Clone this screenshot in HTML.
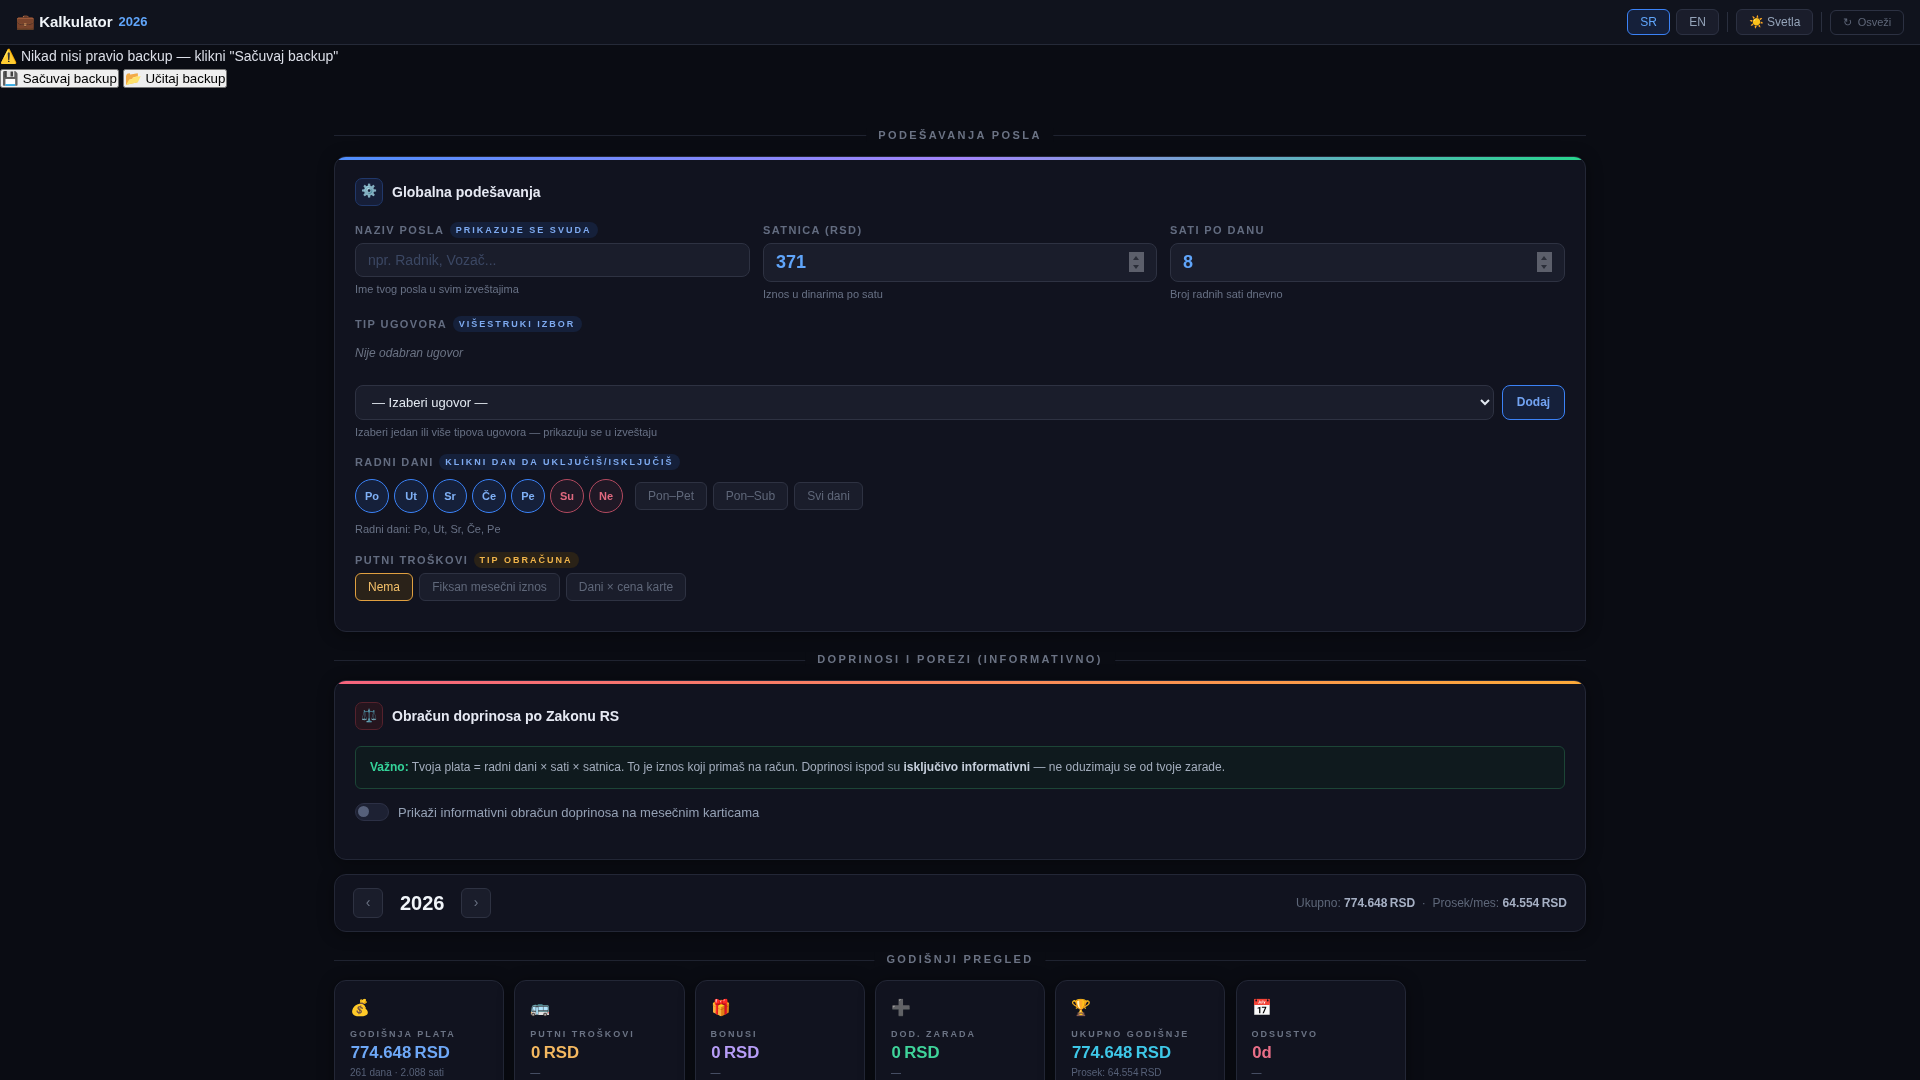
<!DOCTYPE html>
<html lang="sr"><head><meta charset="utf-8"><title>Kalkulator 2026</title>
<style>
*{box-sizing:border-box}
html,body{margin:0;padding:0}
body{background:#0a0c13;font-family:"Liberation Sans",sans-serif;color:#e2e8f0;width:1920px;height:1080px;overflow:hidden;position:relative}
.hdr{position:absolute;left:0;top:0;width:1920px;height:45px;background:#10131d;border-bottom:1px solid #252a38}
.logo{position:absolute;left:16px;top:13px;font-size:15px;font-weight:bold;color:#f1f5f9;white-space:nowrap}
.logo .yr{color:#60a5fa;font-size:13px;margin-left:6px;position:relative;top:-1px}
.hb{position:absolute;top:9px;height:26px;border:1px solid #2c3142;background:#1a1d2b;border-radius:6px;color:#94a3b8;font-size:12px;line-height:24px;text-align:center;white-space:nowrap}
.hb.on{background:#15203a;border-color:#3b82f6;color:#60a5fa}
.sep{position:absolute;top:12px;width:1px;height:20px;background:#2a2f3e}
.bk{position:absolute;left:0;top:45px;font-size:14px;color:#dcdfe8;white-space:nowrap}
.bk .t{height:24px;line-height:22px}
.bk button{font-family:"Liberation Sans",sans-serif;font-size:13.333px;padding:0;height:19px;margin:0;vertical-align:top}
.st{position:absolute;left:334px;width:1252px;height:1px;background:#1f2330}
.st span{position:absolute;left:50%;top:-7px;transform:translateX(-50%);background:#0a0c13;padding:0 12px 0 12px;font-size:11px;font-weight:bold;letter-spacing:2.4px;color:#6b7384;line-height:14px;white-space:nowrap}
.card{position:absolute;left:334px;width:1252px;background:#11131f;border:1px solid #232736;border-radius:12px;overflow:hidden;box-shadow:0 2px 16px rgba(0,0,0,.4)}
.card .bar{position:absolute;left:0;top:0;right:0;height:3px}
.ch{position:absolute;left:20px;display:flex;align-items:center}
.ic{width:28px;height:28px;border-radius:7px;border:1px solid #1e3356;background:#141d33;display:flex;align-items:center;justify-content:center;font-size:13px}
.ct{margin-left:9px;font-size:14px;font-weight:bold;color:#e6e9f3}
.lbl{position:absolute;display:flex;align-items:center;height:16px;font-size:11px;font-weight:bold;letter-spacing:1.4px;color:#636c80;white-space:nowrap;line-height:16px}
.bdg{display:inline-block;margin-left:5.5px;padding:0 6.5px 0 6px;height:16px;line-height:16px;border-radius:8px;background:#15203a;color:#7eaaf0;font-size:9px;letter-spacing:2px}
.inp{position:absolute;background:#1a1d2b;border:1px solid #2e3242;border-radius:8px}
.hint{position:absolute;font-size:11px;color:#687185;white-space:nowrap;line-height:14px}

.ph{position:absolute;left:12px;top:0;line-height:32px;font-size:14px;color:#3b4763;white-space:nowrap}
.num{position:absolute;left:12px;top:0;line-height:37px;font-size:18px;font-weight:bold;color:#60a5fa}
.spin{position:absolute;right:12px;top:8px;width:15px;height:20px;background:#5c5f6b}
.spin:before{content:"";position:absolute;left:4px;top:4px;border-left:3.5px solid transparent;border-right:3.5px solid transparent;border-bottom:4px solid #2b2e39}
.spin:after{content:"";position:absolute;left:4px;bottom:3px;border-left:3.5px solid transparent;border-right:3.5px solid transparent;border-top:4px solid #2b2e39}
.it{position:absolute;font-size:12px;font-style:italic;color:#6b7384;white-space:nowrap}
.sel{position:absolute;background:#1a1d2b;border:1px solid #2e3242;border-radius:8px;font-size:13px;color:#e2e8f0;white-space:nowrap}
.btn{position:absolute;border:1px solid #2e3242;background:#1a1d2b;border-radius:6px;font-size:12px;color:#5f6779;text-align:center;white-space:nowrap}
.day{position:absolute;width:34px;height:34px;border-radius:50%;border:1.5px solid #3b82f6;background:#15203a;color:#7fb0f5;font-size:11px;font-weight:bold;text-align:center;line-height:32px}
.day.we{border-color:#b34a60;background:#1f1825;color:#e0697f}
.sc{position:absolute;top:980px;width:170.3px;height:140px;background:#11131f;border:1px solid #232736;border-radius:12px;box-shadow:0 2px 16px rgba(0,0,0,.4)}
.se{position:absolute;left:15px;top:17px;font-size:16px}
.sl{position:absolute;left:15px;top:48px;font-size:9px;font-weight:bold;letter-spacing:2px;color:#6b7384;white-space:nowrap}
.sv{position:absolute;left:15.7px;top:61.5px;font-size:16.75px;font-weight:bold;letter-spacing:0;white-space:nowrap}
.ss{position:absolute;left:15px;top:86px;font-size:10px;color:#566077;white-space:nowrap}
</style></head><body><div style="position:absolute;left:0;top:0;width:1920px;height:1080px;will-change:transform">
<div class="hdr">
  <div class="logo">💼 Kalkulator<span class="yr">2026</span></div>
  <div class="hb on" style="left:1627px;width:43px">SR</div>
  <div class="hb" style="left:1676px;width:43px">EN</div>
  <div class="sep" style="left:1727px"></div>
  <div class="hb" style="left:1736px;width:77px">☀️ Svetla</div>
  <div class="sep" style="left:1821px"></div>
  <div class="hb" style="left:1830px;top:10px;height:25px;line-height:23px;width:74px;background:transparent;color:#5f6779;font-size:11px">↻<span style="margin-left:6px">Osveži</span></div>
</div>
<div class="bk">
  <div class="t">⚠️ Nikad nisi pravio backup — klikni "Sačuvaj backup"</div>
  <button>💾 Sačuvaj backup</button> <button>📂 Učitaj backup</button>
</div>

<div class="st" style="top:135px"><span>PODEŠAVANJA POSLA</span></div>
<div class="card" style="top:156px;height:476px">
  <div class="bar" style="background:linear-gradient(90deg,#4f8efc,#a485fb 50%,#27d68d)"></div>
  <div class="ch" style="top:21px"><div class="ic" style="border-color:#21386a;background:#161e38"><span style="position:relative;top:-2px">⚙️</span></div><div class="ct">Globalna podešavanja</div></div>
  <div class="lbl" style="left:20px;top:64.5px">NAZIV POSLA<span class="bdg">PRIKAZUJE SE SVUDA</span></div>
  <div class="inp" style="left:20px;top:86px;width:395px;height:34px"><div class="ph">npr. Radnik, Vozač...</div></div>
  <div class="hint" style="left:20px;top:125px">Ime tvog posla u svim izveštajima</div>
  <div class="lbl" style="left:428px;top:65px">SATNICA (RSD)</div>
  <div class="inp" style="left:428px;top:86px;width:394px;height:39px"><div class="num">371</div><div class="spin"></div></div>
  <div class="hint" style="left:428px;top:130px">Iznos u dinarima po satu</div>
  <div class="lbl" style="left:835px;top:65px">SATI PO DANU</div>
  <div class="inp" style="left:835px;top:86px;width:395px;height:39px"><div class="num">8</div><div class="spin"></div></div>
  <div class="hint" style="left:835px;top:130px">Broj radnih sati dnevno</div>
  <div class="lbl" style="left:20px;top:159px">TIP UGOVORA<span class="bdg">VIŠESTRUKI IZBOR</span></div>
  <div class="it" style="left:20px;top:189px">Nije odabran ugovor</div>
  <div class="sel" style="left:20px;top:228px;width:1139px;height:35px;line-height:33px;padding-left:16px">— Izaberi ugovor —<svg style="position:absolute;right:3px;top:12px" width="10" height="8" viewBox="0 0 10 8"><path d="M1 2 L5 6 L9 2" stroke="#e2e8f0" stroke-width="2" fill="none"/></svg></div>
  <div class="btn" style="left:1167px;top:228px;width:63px;height:35px;line-height:33px;border-color:#3b82f6;background:#15203a;color:#72a3f2;font-weight:bold;border-radius:8px">Dodaj</div>
  <div class="hint" style="left:20px;top:268px">Izaberi jedan ili više tipova ugovora — prikazuju se u izveštaju</div>
  <div class="lbl" style="left:20px;top:297px">RADNI DANI<span class="bdg">KLIKNI DAN DA UKLJUČIŠ/ISKLJUČIŠ</span></div>
  <div class="day" style="left:20px;top:322px">Po</div>
  <div class="day" style="left:59px;top:322px">Ut</div>
  <div class="day" style="left:98px;top:322px">Sr</div>
  <div class="day" style="left:137px;top:322px">Če</div>
  <div class="day" style="left:176px;top:322px">Pe</div>
  <div class="day we" style="left:215px;top:322px">Su</div>
  <div class="day we" style="left:254px;top:322px">Ne</div>
  <div class="btn" style="left:300px;top:325px;width:72px;height:28px;line-height:26px">Pon–Pet</div>
  <div class="btn" style="left:378px;top:325px;width:75px;height:28px;line-height:26px">Pon–Sub</div>
  <div class="btn" style="left:459px;top:325px;width:69px;height:28px;line-height:26px">Svi dani</div>
  <div class="hint" style="left:20px;top:365px">Radni dani: Po, Ut, Sr, Če, Pe</div>
  <div class="lbl" style="left:20px;top:395px">PUTNI TROŠKOVI<span class="bdg" style="background:#2a2217;color:#f0b44a">TIP OBRAČUNA</span></div>
  <div class="btn" style="left:20px;top:416px;width:58px;height:28px;line-height:26px;border-color:#e0a040;background:#2a2219;color:#f3c06a">Nema</div>
  <div class="btn" style="left:84px;top:416px;width:141px;height:28px;line-height:26px">Fiksan mesečni iznos</div>
  <div class="btn" style="left:231px;top:416px;width:120px;height:28px;line-height:26px">Dani × cena karte</div>
</div>

<div class="st" style="top:660px"><span style="top:-8px">DOPRINOSI I POREZI (INFORMATIVNO)</span></div>
<div class="card" style="top:680px;height:180px">
  <div class="bar" style="background:linear-gradient(90deg,#f6647e,#fcaa3a)"></div>
  <div class="ch" style="top:21px"><div class="ic" style="border-color:#55222d;background:#25151e"><span style="position:relative;top:-1px">⚖️</span></div><div class="ct">Obračun doprinosa po Zakonu RS</div></div>
  <div style="position:absolute;left:20px;top:65px;width:1210px;height:43px;border:1px solid #1c4536;background:#0f1a1e;border-radius:6px;font-size:12px;color:#a3adbd;line-height:41px;padding-left:14px;white-space:nowrap"><b style="color:#34d399">Važno:</b> Tvoja plata = radni dani × sati × satnica. To je iznos koji primaš na račun. Doprinosi ispod su <b style="color:#c6cfdc">isključivo informativni</b> — ne oduzimaju se od tvoje zarade.</div>
  <div style="position:absolute;left:20px;top:122px;width:34px;height:18px;border-radius:9px;background:#1d2133;border:1px solid #2c3045"><div style="position:absolute;left:2px;top:2px;width:11px;height:11px;border-radius:50%;background:#56607a"></div></div>
  <div style="position:absolute;left:63px;top:124px;font-size:13px;color:#94a0b4;white-space:nowrap">Prikaži informativni obračun doprinosa na mesečnim karticama</div>
</div>

<div class="card" style="top:874px;height:58px;border-radius:12px">
  <div class="btn" style="left:18px;top:13px;width:30px;height:30px;line-height:27px;font-size:14px;color:#6b7384">‹</div>
  <div style="position:absolute;left:65px;top:17px;font-size:20px;font-weight:bold;color:#f1f5f9">2026</div>
  <div class="btn" style="left:126px;top:13px;width:30px;height:30px;line-height:27px;font-size:14px;color:#6b7384">›</div>
  <div style="position:absolute;right:18px;top:21px;font-size:12px;color:#5e6779;white-space:nowrap">Ukupno: <b style="color:#a6b0c4">774.648&#8239;RSD</b> &nbsp;·&nbsp; Prosek/mes: <b style="color:#a6b0c4">64.554&#8239;RSD</b></div>
</div>

<div class="st" style="top:960px"><span style="top:-8.5px">GODIŠNJI PREGLED</span></div>
<div class="sc" style="left:334.0px"><div class="se">💰</div><div class="sl">GODIŠNJA PLATA</div><div class="sv" style="color:#6ea8f7">774.648&#8239;RSD</div><div class="ss">261 dana · 2.088 sati</div></div>
<div class="sc" style="left:514.3px"><div class="se">🚌</div><div class="sl">PUTNI TROŠKOVI</div><div class="sv" style="color:#f4b860">0&#8239;RSD</div><div class="ss">—</div></div>
<div class="sc" style="left:694.6px"><div class="se">🎁</div><div class="sl">BONUSI</div><div class="sv" style="color:#b79df7">0&#8239;RSD</div><div class="ss">—</div></div>
<div class="sc" style="left:874.9px"><div class="se">➕</div><div class="sl">DOD. ZARADA</div><div class="sv" style="color:#3fd39a">0&#8239;RSD</div><div class="ss">—</div></div>
<div class="sc" style="left:1055.2px"><div class="se">🏆</div><div class="sl">UKUPNO GODIŠNJE</div><div class="sv" style="color:#3ec8e8">774.648&#8239;RSD</div><div class="ss">Prosek: 64.554&#8239;RSD</div></div>
<div class="sc" style="left:1235.5px"><div class="se">📅</div><div class="sl">ODSUSTVO</div><div class="sv" style="color:#ea6f88">0d</div><div class="ss">—</div></div>
</div></body></html>
